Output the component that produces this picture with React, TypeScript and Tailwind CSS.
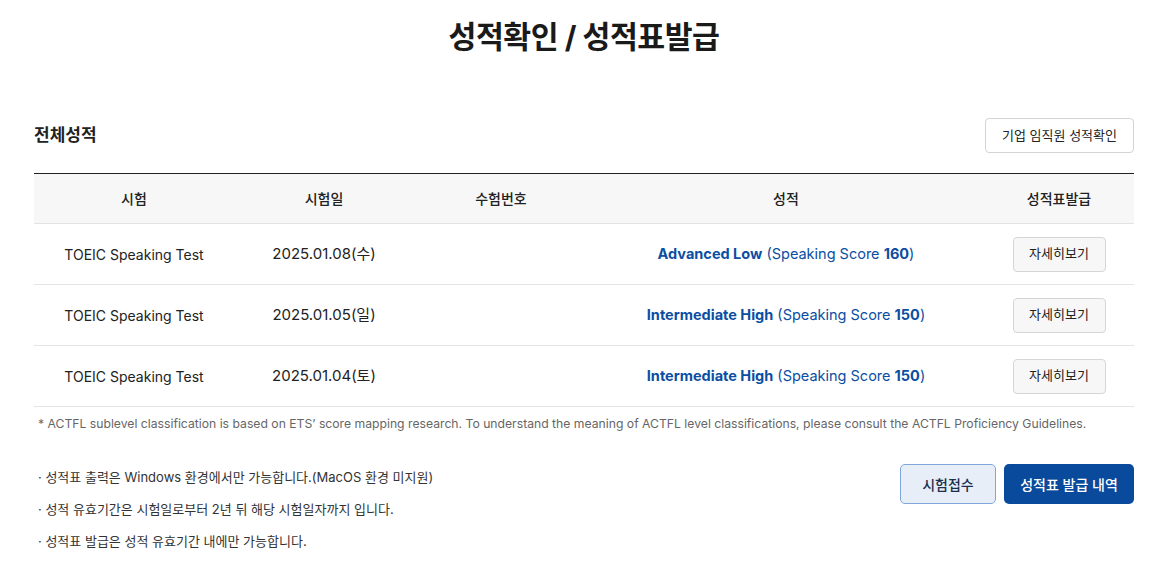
import React from "react";

const rows = [
  { date: "2025.01.08(수)", level: "Advanced Low", score: "160" },
  { date: "2025.01.05(일)", level: "Intermediate High", score: "150" },
  { date: "2025.01.04(토)", level: "Intermediate High", score: "150" },
];

export default function App() {
  return (
    <div
      className="w-full bg-white text-[#222]"
      style={{ fontFamily: 'Inter, "Noto Sans CJK KR", sans-serif' }}
    >
      <div className="ml-[34px] w-[1100px] pt-[15px] pb-[20px]">
        <h1 className="text-center text-[30.3px] font-bold leading-[44px] tracking-[-0.5px] text-[#1a1a1a]">
          성적확인 / 성적표발급
        </h1>

        <div className="mt-[59px] flex items-center justify-between">
          <h2 className="text-[17px] font-bold text-[#222]">전체성적</h2>
          <button className="h-[35px] w-[149px] rounded-[4px] border border-[#d4d4d4] bg-white text-[13px] text-[#222]">
            기업 임직원 성적확인
          </button>
        </div>

        <div className="mt-[20px] border-t border-[#222]">
          <div className="grid h-[50px] grid-cols-[200px_180px_174px_396px_150px] items-center border-b border-[#e3e3e3] bg-[#f7f7f7] text-[14px] font-medium text-[#222]">
            <div className="text-center">시험</div>
            <div className="text-center">시험일</div>
            <div className="text-center">수험번호</div>
            <div className="text-center">성적</div>
            <div className="text-center">성적표발급</div>
          </div>
          {rows.map((r, i) => (
            <div
              key={i}
              className="grid h-[61px] grid-cols-[200px_180px_174px_396px_150px] items-center border-b border-[#e3e3e3] text-[14px] text-[#222]"
            >
              <div className="text-center">TOEIC Speaking Test</div>
              <div className="text-center text-[15px]">{r.date}</div>
              <div className="text-center"></div>
              <div className="text-center text-[14.5px] text-[#0b4ea2]">
                <span className="font-bold">{r.level}</span> (Speaking Score{" "}
                <span className="font-bold">{r.score}</span>)
              </div>
              <div className="flex justify-center">
                <button className="h-[35px] w-[93px] rounded-[4px] border border-[#d6d6d6] bg-[#f7f7f7] text-[13px] text-[#222]">
                  자세히보기
                </button>
              </div>
            </div>
          ))}
        </div>

        <p className="mt-[8px] pl-[4px] text-[12.2px] text-[#666]">
          * ACTFL sublevel classification is based on ETS’ score mapping research. To understand the meaning of ACTFL level classifications, please consult the ACTFL Proficiency Guidelines.
        </p>

        <div className="mt-[31px] flex items-start justify-between">
          <ul className="flex flex-col gap-[13px] pl-[4px] pt-[4px] text-[13px] leading-[19px] text-[#333]">
            <li>· 성적표 출력은 Windows 환경에서만 가능합니다.(MacOS 환경 미지원)</li>
            <li>· 성적 유효기간은 시험일로부터 2년 뒤 해당 시험일자까지 입니다.</li>
            <li>· 성적표 발급은 성적 유효기간 내에만 가능합니다.</li>
          </ul>
          <div className="flex gap-[8px]">
            <button className="h-[40px] w-[96px] rounded-[5px] border border-[#7fa6da] bg-[#e8eef8] text-[14px] font-medium text-[#1c2f4d]">
              시험접수
            </button>
            <button className="h-[40px] w-[130px] rounded-[5px] bg-[#0a4a9c] text-[14px] font-medium text-white">
              성적표 발급 내역
            </button>
          </div>
        </div>
      </div>
    </div>
  );
}
